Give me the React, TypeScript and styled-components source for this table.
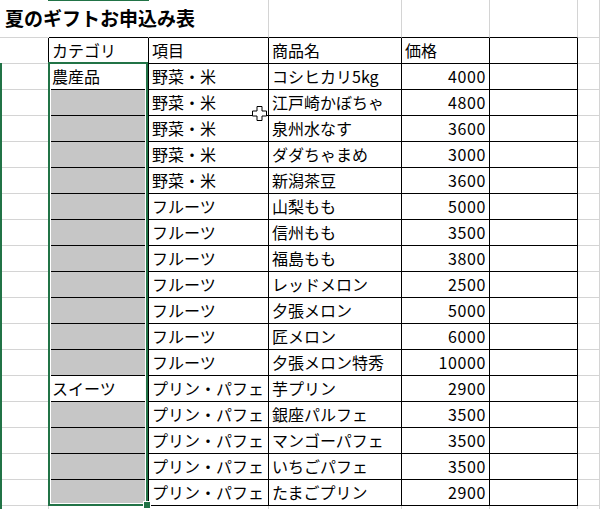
import styled, { createGlobalStyle } from "styled-components";

const GlobalStyle = createGlobalStyle`
    html, body {
        margin: 0;
        padding: 0;
        background: #ffffff;
        overflow: hidden;
    }
    body {
        font-family: "Noto Sans CJK JP", "Noto Sans", sans-serif;
        color: #000000;
    }
`;

const GRID = "#d4d4d4";
const GREEN = "#217346";

const Sheet = styled.div`
    position: relative;
    width: 600px;
    height: 509px;
    overflow: hidden;
    display: grid;
    grid-template-columns: 49px 100px 120px 133px 88px 88px 1fr;
    grid-template-rows: 38px;
    grid-auto-rows: 26px;
`;

type Edge = "grid" | "black" | "none";

interface ICell {
    $row: number;
    $col: number;
    $right: Edge;
    $bottom: Edge;
    $fill?: boolean;
    $num?: boolean;
}
const edgeColor = (e: Edge) => (e === "black" ? "#000000" : e === "grid" ? GRID : "transparent");

const Cell = styled.div<ICell>`
    grid-row: ${props => props.$row};
    grid-column: ${props => props.$col};
    box-sizing: border-box;
    border-right: 1px solid ${props => edgeColor(props.$right)};
    border-bottom: 1px solid ${props => edgeColor(props.$bottom)};
    background-color: ${props => (props.$fill ? "#c6c6c6" : "transparent")};
    display: flex;
    align-items: center;
    justify-content: ${props => (props.$num ? "flex-end" : "flex-start")};
    padding: 0 3px 1px 3px;
    font-size: 16px;
    letter-spacing: ${props => (props.$num ? "0.6px" : "0")};
    white-space: nowrap;
    line-height: 1;
`;

const Title = styled.div`
    font-size: 19px;
    font-weight: 700;
    padding-left: 2px;
    padding-bottom: 1px;
`;

// selection of B3:B19, laid over the cells in the same grid area
const SelectionFrame = styled.div`
    grid-column: 2;
    grid-row: 3 / 20;
    margin: -2px 1px 0 -1px;
    position: relative;
    z-index: 2;
    box-sizing: border-box;
    border: 2px solid ${GREEN};
    box-shadow: inset 0 0 0 1px #ffffff;
    pointer-events: none;
`;

const FillHandle = styled.div`
    position: absolute;
    right: -5px;
    bottom: -5px;
    width: 6px;
    height: 6px;
    background: ${GREEN};
    border: 1px solid #ffffff;
`;

const RowHeaderEdge = styled.div`
    grid-column: 1;
    grid-row: 3 / 21;
    justify-self: start;
    width: 2px;
    margin-top: -1px;
    background: ${GREEN};
    z-index: 1;
`;

const ColHeaderEdge = styled.div`
    grid-column: 2;
    grid-row: 1;
    align-self: start;
    height: 1px;
    margin-left: -1px;
    background: ${GREEN};
`;

const Cursor = styled.svg`
    position: absolute;
    left: 252px;
    top: 106px;
    z-index: 3;
`;

const header = ["カテゴリ", "項目", "商品名", "価格", ""];

const rows: [string, string, string, string][] = [
    ["農産品", "野菜・米", "コシヒカリ5kg", "4000"],
    ["", "野菜・米", "江戸崎かぼちゃ", "4800"],
    ["", "野菜・米", "泉州水なす", "3600"],
    ["", "野菜・米", "ダダちゃまめ", "3000"],
    ["", "野菜・米", "新潟茶豆", "3600"],
    ["", "フルーツ", "山梨もも", "5000"],
    ["", "フルーツ", "信州もも", "3500"],
    ["", "フルーツ", "福島もも", "3800"],
    ["", "フルーツ", "レッドメロン", "2500"],
    ["", "フルーツ", "夕張メロン", "5000"],
    ["", "フルーツ", "匠メロン", "6000"],
    ["", "フルーツ", "夕張メロン特秀", "10000"],
    ["スイーツ", "プリン・パフェ", "芋プリン", "2900"],
    ["", "プリン・パフェ", "銀座パルフェ", "3500"],
    ["", "プリン・パフェ", "マンゴーパフェ", "3500"],
    ["", "プリン・パフェ", "いちごパフェ", "3500"],
    ["", "プリン・パフェ", "たまごプリン", "2900"],
];

const COLS = 7;
const TOTAL_ROWS = 20;

function cellText(r: number, c: number): string {
    if (r === 1 && c >= 1 && c <= 5) return header[c - 1];
    if (r >= 2 && r <= 18 && c >= 1 && c <= 4) return rows[r - 2][c - 1];
    return "";
}

function rightEdge(r: number, c: number): Edge {
    if (r >= 1 && r <= 18 && c <= 5) return "black";
    if (r === 0 && c <= 1) return "none";
    return "grid";
}

function bottomEdge(r: number, c: number): Edge {
    if (r <= 18 && c >= 1 && c <= 5) return "black";
    return "grid";
}

function App() {
    const cells = [];
    for (let r = 0; r < TOTAL_ROWS; r++) {
        for (let c = 0; c < COLS; c++) {
            const text = cellText(r, c);
            const fill = r >= 2 && r <= 18 && c === 1 && text === "";
            cells.push(
                <Cell
                    key={`${r}-${c}`}
                    $row={r + 1}
                    $col={c + 1}
                    $right={rightEdge(r, c)}
                    $bottom={bottomEdge(r, c)}
                    $fill={fill}
                    $num={r >= 2 && c === 4}
                >
                    {r === 0 && c === 0 ? <Title>夏のギフトお申込み表</Title> : text}
                </Cell>
            );
        }
    }
    return (
        <>
            <GlobalStyle />
            <Sheet>
                {cells}
                <SelectionFrame>
                    <FillHandle />
                </SelectionFrame>
                <RowHeaderEdge />
                <ColHeaderEdge />
                <Cursor width="15" height="15" viewBox="0 0 15 15">
                    <polygon
                        points="5,0.5 10,0.5 10,5 14.5,5 14.5,10 10,10 10,14.5 5,14.5 5,10 0.5,10 0.5,5 5,5"
                        fill="#ffffff"
                        stroke="#000000"
                        strokeWidth="1"
                    />
                </Cursor>
            </Sheet>
        </>
    );
}

export default App;
